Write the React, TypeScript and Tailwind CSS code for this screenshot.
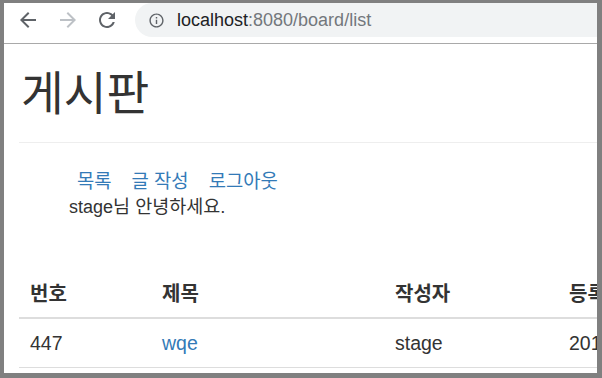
import React from "react";

const BackIcon = ({ color }: { color: string }) => (
  <svg width="24" height="24" viewBox="0 0 24 24" fill={color}>
    <path d="M20 11H7.83l5.59-5.59L12 4l-8 8 8 8 1.41-1.41L7.83 13H20v-2z" />
  </svg>
);

const ForwardIcon = ({ color }: { color: string }) => (
  <svg width="24" height="24" viewBox="0 0 24 24" fill={color}>
    <path d="M12 4l-1.41 1.41L16.17 11H4v2h12.17l-5.58 5.59L12 20l8-8z" />
  </svg>
);

const ReloadIcon = () => (
  <svg width="24" height="24" viewBox="0 0 24 24" fill="#5f6368">
    <path d="M17.65 6.35C16.2 4.9 14.21 4 12 4c-4.42 0-7.99 3.58-7.99 8s3.57 8 7.99 8c3.73 0 6.84-2.55 7.73-6h-2.08c-.82 2.33-3.04 4-5.65 4-3.31 0-6-2.69-6-6s2.69-6 6-6c1.66 0 3.14.69 4.22 1.78L13 11h7V4l-2.35 2.35z" />
  </svg>
);

const InfoIcon = () => (
  <svg width="17" height="17" viewBox="0 0 24 24" fill="#5f6368">
    <path d="M11 7h2v2h-2zm0 4h2v6h-2zm1-9C6.48 2 2 6.48 2 12s4.48 10 10 10 10-4.48 10-10S17.52 2 12 2zm0 18c-4.41 0-8-3.59-8-8s3.59-8 8-8 8 3.59 8 8-3.59 8-8 8z" />
  </svg>
);

const posts = [{ no: 447, title: "wqe", writer: "stage", date: "2019-03-14" }];

export default function App() {
  return (
    <div className="w-[602px] h-[378px] bg-[#808080] pt-[3px] pl-[4px] pr-[5px] pb-[5px]">
      <div className="w-full h-full bg-white overflow-hidden flex flex-col">
        {/* browser toolbar */}
        <div className="h-[34px] flex items-center shrink-0">
          <div className="w-[12px]" />
          <BackIcon color="#5f6368" />
          <div className="w-[16px]" />
          <ForwardIcon color="#bdc1c6" />
          <div className="w-[15px]" />
          <ReloadIcon />
          <div className="w-[16px]" />
          <div className="flex-1 h-[34px] bg-[#f1f3f4] rounded-l-[17px] flex items-center pl-[13px]">
            <InfoIcon />
            <div className="ml-[12px] text-[18px] font-['Liberation_Sans',sans-serif]">
              <span className="text-[#202124]">localhost</span>
              <span className="text-[#73777c]">:8080/board/list</span>
            </div>
          </div>
        </div>
        <div className="h-[6px] shrink-0" />
        <div className="h-px bg-[#a9a9a9] shrink-0" />

        {/* page */}
        <div className="pl-[15px] text-[#333] text-[18px] leading-[25px] font-['Liberation_Sans','Noto_Sans_CJK_KR',sans-serif]">
          <h1 className="mt-[18px] text-[46.5px] leading-[56px] font-['Noto_Sans_CJK_KR',sans-serif] font-normal pl-[2px]">
            게시판
          </h1>
          <div className="mt-[24px] h-px bg-[#eeeeee] w-[700px]" />
          <div className="pl-[50px] mt-[26px]">
            <div className="flex gap-[20px] pl-[8px] text-[#337ab7] text-[18.8px]">
              <a>목록</a>
              <a>글 작성</a>
              <a>로그아웃</a>
            </div>
            <div>
              stage<span className="text-[18.5px]">님 안녕하세요.</span>
            </div>
          </div>
          <table className="mt-[52px] w-[800px] border-collapse text-left">
            <thead>
              <tr className="border-b-2 border-[#dddddd] text-[20px]">
                <th className="w-[132px] px-[11px] py-[10px] font-bold">번호</th>
                <th className="w-[233px] px-[11px] py-[10px] font-bold">제목</th>
                <th className="w-[174px] px-[11px] py-[10px] font-bold">작성자</th>
                <th className="px-[11px] py-[10px] font-bold">등록일</th>
              </tr>
            </thead>
            <tbody className="text-[19.5px]">
              {posts.map((p) => (
                <tr key={p.no} className="border-b border-[#dddddd]">
                  <td className="px-[11px] pt-[12px] pb-[11px]">{p.no}</td>
                  <td className="px-[11px] pt-[12px] pb-[11px] text-[#337ab7]">{p.title}</td>
                  <td className="px-[11px] pt-[12px] pb-[11px]">{p.writer}</td>
                  <td className="px-[11px] pt-[12px] pb-[11px]">{p.date}</td>
                </tr>
              ))}
            </tbody>
          </table>
        </div>
      </div>
    </div>
  );
}
